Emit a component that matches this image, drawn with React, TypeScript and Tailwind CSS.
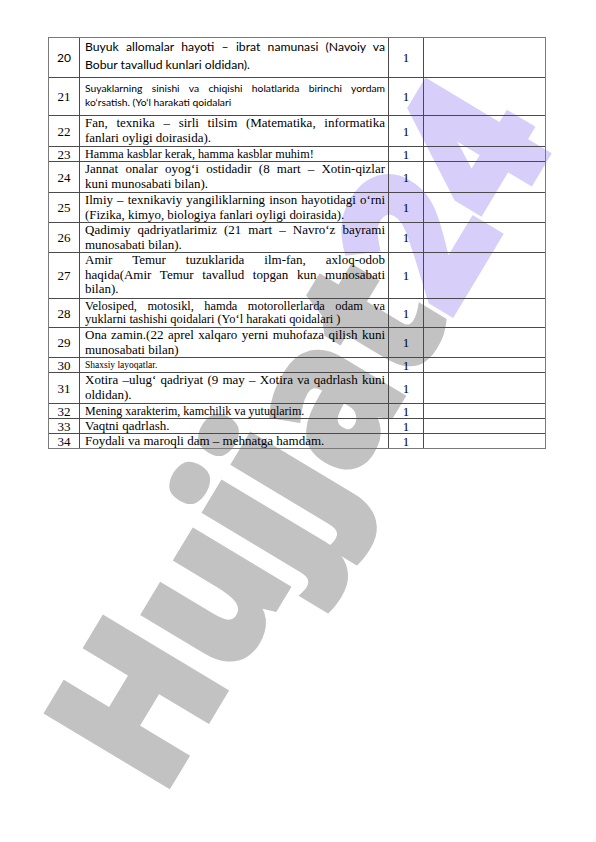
import React from "react";

type Row = {
  n: string;
  h: string;
  numCls: string;
  txtCls: string;
  lines: string[];
};

const SERIF = "font-['Liberation_Serif',serif]";

const rows: Row[] = [
  {
    n: "20",
    h: "h-[39px]",
    numCls: "font-['Lato',sans-serif] text-[12px]",
    txtCls: "font-['Lato',sans-serif] text-[12.2px] leading-[18px] pt-[0px]",
    lines: ["Buyuk allomalar hayoti – ibrat namunasi (Navoiy va", "Bobur tavallud kunlari oldidan)."],
  },
  {
    n: "21",
    h: "h-[38px] border-t",
    numCls: "font-['Liberation_Serif',serif] text-[13px]",
    txtCls: "font-['Lato',sans-serif] text-[10.3px] leading-[14px] pt-[3px]",
    lines: ["Suyaklarning sinishi va chiqishi holatlarida birinchi yordam", "ko‘rsatish. (Yo‘l harakati qoidalari"],
  },
  {
    n: "22",
    h: "h-[31px] border-t",
    numCls: "font-['Liberation_Serif',serif] text-[13px]",
    txtCls: "font-['Liberation_Serif',serif] text-[13px] leading-[14.5px] pt-[0px]",
    lines: ["Fan, texnika – sirli tilsim (Matematika, informatika", "fanlari oyligi doirasida)."],
  },
  {
    n: "23",
    h: "h-[15px] border-t",
    numCls: "font-['Liberation_Serif',serif] text-[13px]",
    txtCls: "font-['Liberation_Serif',serif] text-[12.2px] leading-[14px] pt-[0px]",
    lines: ["Hamma kasblar kerak, hamma kasblar muhim!"],
  },
  {
    n: "24",
    h: "h-[31px] border-t",
    numCls: "font-['Liberation_Serif',serif] text-[13px]",
    txtCls: "font-['Liberation_Serif',serif] text-[13px] leading-[14.5px] pt-[0px]",
    lines: ["Jannat onalar oyog‘i ostidadir (8 mart – Xotin-qizlar", "kuni munosabati bilan)."],
  },
  {
    n: "25",
    h: "h-[30px] border-t",
    numCls: "font-['Liberation_Serif',serif] text-[13px]",
    txtCls: "font-['Liberation_Serif',serif] text-[12.9px] leading-[14.5px] pt-[0px]",
    lines: ["Ilmiy – texnikaviy yangiliklarning inson hayotidagi o‘rni", "(Fizika, kimyo, biologiya fanlari oyligi doirasida)."],
  },
  {
    n: "26",
    h: "h-[30px] border-t",
    numCls: "font-['Liberation_Serif',serif] text-[13px]",
    txtCls: "font-['Liberation_Serif',serif] text-[13px] leading-[14.5px] pt-[0px]",
    lines: ["Qadimiy qadriyatlarimiz (21 mart – Navro‘z bayrami", "munosabati bilan)."],
  },
  {
    n: "27",
    h: "h-[46px] border-t",
    numCls: "font-['Liberation_Serif',serif] text-[13px]",
    txtCls: "font-['Liberation_Serif',serif] text-[13px] leading-[14.5px] pt-[0px]",
    lines: ["Amir Temur tuzuklarida ilm-fan, axloq-odob", "haqida(Amir Temur tavallud topgan kun munosabati", "bilan)."],
  },
  {
    n: "28",
    h: "h-[29px] border-t",
    numCls: "font-['Liberation_Serif',serif] text-[13px]",
    txtCls: "font-['Liberation_Serif',serif] text-[12.4px] leading-[13px] pt-[1px]",
    lines: ["Velosiped, motosikl, hamda motorollerlarda odam va", "yuklarni tashishi qoidalari (Yo‘l harakati qoidalari )"],
  },
  {
    n: "29",
    h: "h-[30px] border-t",
    numCls: "font-['Liberation_Serif',serif] text-[13px]",
    txtCls: "font-['Liberation_Serif',serif] text-[13px] leading-[14.5px] pt-[0px]",
    lines: ["Ona zamin.(22 aprel xalqaro yerni muhofaza qilish kuni", "munosabati bilan)"],
  },
  {
    n: "30",
    h: "h-[15px] border-t",
    numCls: "font-['Liberation_Serif',serif] text-[13px]",
    txtCls: "font-['Liberation_Serif',serif] text-[9.5px] leading-[14px] pt-[0px]",
    lines: ["Shaxsiy layoqatlar."],
  },
  {
    n: "31",
    h: "h-[31px] border-t",
    numCls: "font-['Liberation_Serif',serif] text-[13px]",
    txtCls: "font-['Liberation_Serif',serif] text-[13px] leading-[14.5px] pt-[0px]",
    lines: ["Xotira –ulug‘ qadriyat (9 may – Xotira va qadrlash kuni", "oldidan)."],
  },
  {
    n: "32",
    h: "h-[15px] border-t",
    numCls: "font-['Liberation_Serif',serif] text-[13px]",
    txtCls: "font-['Liberation_Serif',serif] text-[12px] leading-[14px] pt-[0px]",
    lines: ["Mening xarakterim, kamchilik va yutuqlarim."],
  },
  {
    n: "33",
    h: "h-[15px] border-t",
    numCls: "font-['Liberation_Serif',serif] text-[13px]",
    txtCls: "font-['Liberation_Serif',serif] text-[13px] leading-[14px] pt-[0px]",
    lines: ["Vaqtni qadrlash."],
  },
  {
    n: "34",
    h: "h-[15px] border-t",
    numCls: "font-['Liberation_Serif',serif] text-[13px]",
    txtCls: "font-['Liberation_Serif',serif] text-[13px] leading-[14px] pt-[0px]",
    lines: ["Foydali va maroqli dam – mehnatga hamdam."],
  },
];

export default function App() {
  return (
    <div className="relative w-[596px] h-[842px] overflow-hidden bg-white text-black">
      {/* watermark */}
      <div className="absolute left-[292px] top-[430px] -translate-x-1/2 -translate-y-1/2 rotate-[-59deg] scale-y-[1.1] whitespace-nowrap font-['Open_Sans',sans-serif] font-extrabold text-[182px] leading-none tracking-[-3px] select-none">
        <span className="text-[#c2c2c2] [-webkit-text-stroke:4px_#c2c2c2]">Hujjat</span>
        <span className="text-[#d7cff9] [-webkit-text-stroke:4px_#d7cff9]">24</span>
      </div>

      <div className="relative pl-[48px] pt-[37px]">
        <div className="w-[498px] border border-[#7a7a7a]">
          {rows.map((r) => (
            <div
              key={r.n}
              className={`grid grid-cols-[31px_309px_35px_1fr] border-[#4a4a4a] ${r.h}`}
            >
              <div className={`flex items-center justify-center border-r border-[#4a4a4a] leading-none ${r.numCls}`}>
                {r.n}
              </div>
              <div className={`border-r border-[#4a4a4a] pl-[5px] pr-[3px] overflow-hidden ${r.txtCls}`}>
                {r.lines.map((l, i) => (
                  <div
                    key={i}
                    className={
                      i < r.lines.length - 1
                        ? "text-justify [text-align-last:justify]"
                        : "text-left"
                    }
                  >
                    {l}
                  </div>
                ))}
              </div>
              <div className={`flex items-center justify-center border-r border-[#4a4a4a] leading-none ${SERIF} text-[13px]`}>
                1
              </div>
              <div />
            </div>
          ))}
        </div>
      </div>
    </div>
  );
}
